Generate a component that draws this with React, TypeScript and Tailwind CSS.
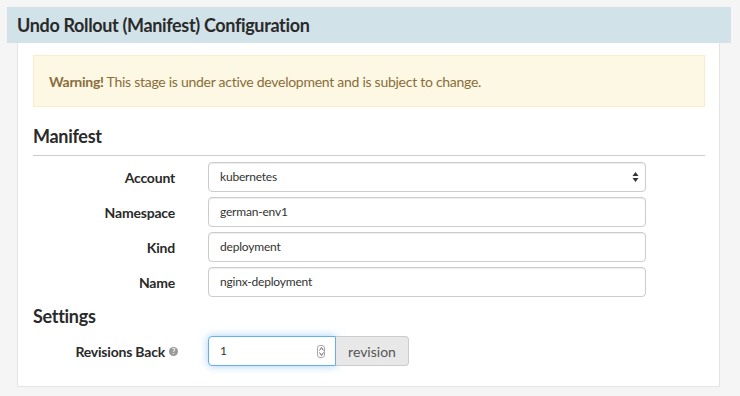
import React from "react";

const font = { fontFamily: "Lato, 'Open Sans', sans-serif" };

function Row({ label, value, select }: { label: string; value: string; select?: boolean }) {
  return (
    <div className="flex items-center h-[30px]">
      <div className="w-[142px] text-right text-[14px] font-bold text-[#2a2a2a] tracking-[-0.2px]">{label}</div>
      <div className="ml-[33px] w-[438px] h-[30px] border border-[#ccc] rounded-[4px] bg-white flex items-center pl-[11px] pr-[6px] text-[12px] text-[#333] tracking-[-0.2px] shadow-[inset_0_1px_1px_rgba(0,0,0,0.075)]">
        <span className="flex-1">{value}</span>
        {select && (
          <svg width="7" height="12" viewBox="0 0 7 12">
            <path d="M3.5 1 L6.5 5 L0.5 5 Z" fill="#333" />
            <path d="M3.5 11 L6.5 7 L0.5 7 Z" fill="#333" />
          </svg>
        )}
      </div>
    </div>
  );
}

export default function App() {
  return (
    <div className="w-[740px] h-[396px] bg-[#f5f5f5] pt-[7px] pl-[7px] pr-[9px] overflow-hidden" style={font}>
      <div className="h-[36px] bg-[#d1e3e9] flex items-center pl-[10px] text-[18px] font-bold text-[#2a2a2a] tracking-[-0.35px]">
        Undo Rollout (Manifest) Configuration
      </div>
      <div className="ml-[10px] mr-[11px] bg-white border-l border-r border-b border-[#e5e5e5] pl-[15px] pr-[14px] pt-[12px] h-[344px]">
        <div className="h-[52px] bg-[#fcf8e3] border border-[#faebcc] flex items-center pl-[15px] text-[14px] text-[#8a6d3b] tracking-[-0.27px]">
          <b className="font-bold">Warning!</b>&nbsp;This stage is under active development and is subject to change.
        </div>
        <div className="h-[49px] border-b border-[#ccc] flex items-end pb-[5px] text-[18px] font-bold text-[#2a2a2a] tracking-[-0.3px]">
          Manifest
        </div>
        <div className="mt-[6px] flex flex-col gap-[5px]">
          <Row label="Account" value="kubernetes" select />
          <Row label="Namespace" value="german-env1" />
          <Row label="Kind" value="deployment" />
          <Row label="Name" value="nginx-deployment" />
        </div>
        <div className="h-[39px] flex items-end pb-[6px] text-[18px] font-bold text-[#2a2a2a] tracking-[-0.3px]">Settings</div>
        <div className="flex items-center h-[30px]">
          <div className="w-[145px] flex justify-end items-center text-[14px] font-bold text-[#2a2a2a] tracking-[-0.2px]">
            Revisions Back
            <svg className="ml-[4px]" width="9" height="9" viewBox="0 0 10 10">
              <circle cx="5" cy="5" r="5" fill="#999" />
              <text x="5" y="8" textAnchor="middle" fontSize="8" fontWeight="bold" fill="#fff" fontFamily="Lato, sans-serif">?</text>
            </svg>
          </div>
          <div className="ml-[30px] flex h-[30px]">
            <div className="w-[128px] h-[30px] border border-[#66afe9] rounded-l-[4px] bg-white flex items-center pl-[11px] pr-[10px] text-[12px] text-[#333] shadow-[0_0_8px_rgba(102,175,233,0.6)]">
              <span className="flex-1">1</span>
              <div className="w-[8px] h-[13px] border border-[#aaa] rounded-[3px] flex flex-col items-center justify-center gap-[1px]">
                <svg width="5" height="4" viewBox="0 0 5 4"><path d="M0.5 3.5 L2.5 0.5 L4.5 3.5" stroke="#555" fill="none" strokeWidth="0.9" /></svg>
                <svg width="5" height="4" viewBox="0 0 5 4"><path d="M0.5 0.5 L2.5 3.5 L4.5 0.5" stroke="#555" fill="none" strokeWidth="0.9" /></svg>
              </div>
            </div>
            <div className="w-[73px] h-[30px] bg-[#e8e8e8] border border-l-0 border-[#ccc] rounded-r-[4px] flex items-center justify-center text-[14px] text-[#555]">
              revision
            </div>
          </div>
        </div>
      </div>
    </div>
  );
}
